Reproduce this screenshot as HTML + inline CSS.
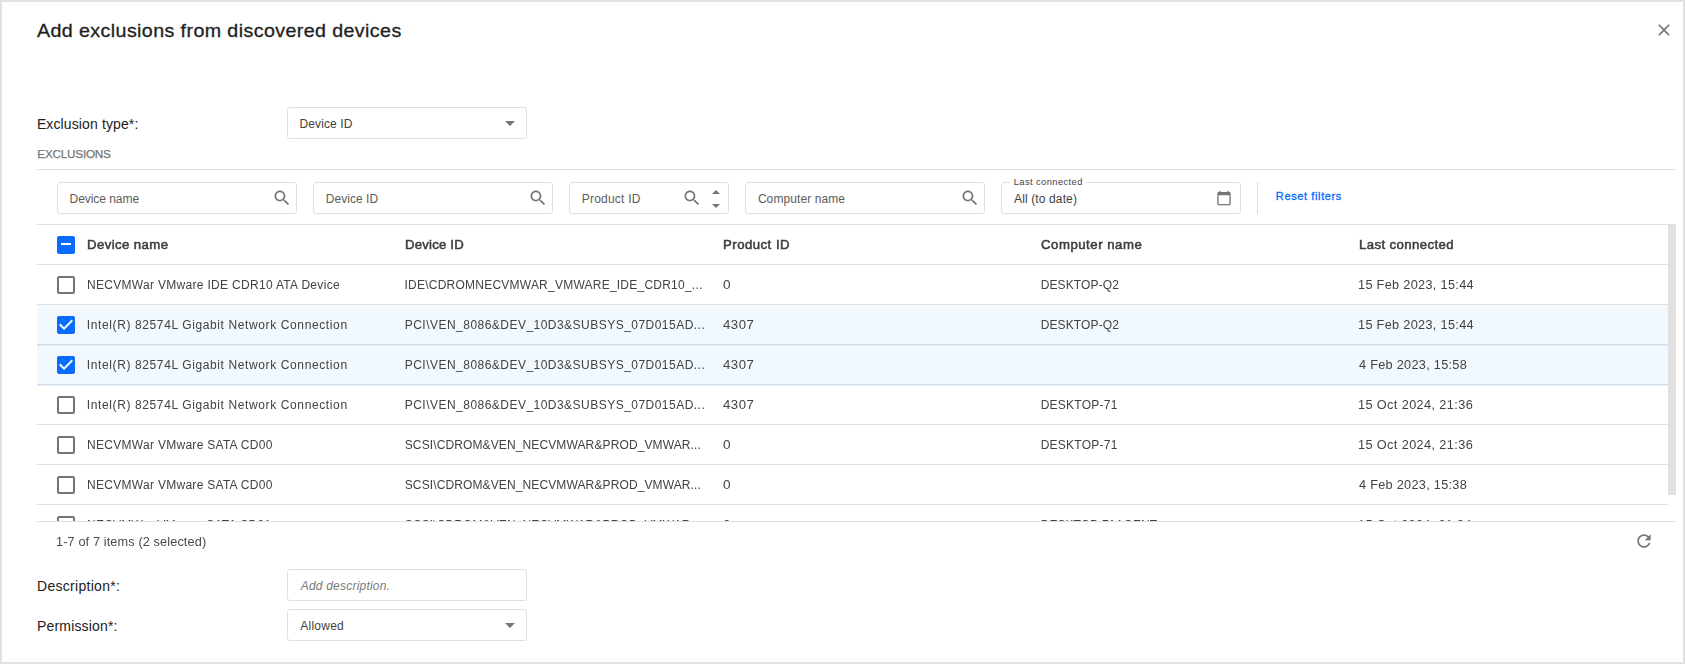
<!DOCTYPE html>
<html lang="en">
<head>
<meta charset="utf-8">
<title>Add exclusions from discovered devices</title>
<style>
*{box-sizing:border-box;margin:0;padding:0}
html,body{width:1685px;height:664px;overflow:hidden;background:#e1e1e1}
body{font-family:"Liberation Sans",sans-serif;color:#424242;font-size:12px;position:relative}
.dlg{position:absolute;left:2px;top:2px;width:1681px;height:660px;background:#fff}
.t{position:absolute;white-space:nowrap;line-height:16px;height:16px}
.box{position:absolute;border:1px solid #e0e0e0;border-radius:3px;background:#fff;height:32px}
.hline{position:absolute;height:1px;background:#e0e0e0}
.caret{position:absolute;width:0;height:0;border-left:5px solid transparent;border-right:5px solid transparent;border-top:5px solid #757575}
.tri{position:absolute;width:0;height:0;border-left:4px solid transparent;border-right:4px solid transparent}
svg{position:absolute;display:block}
.clip{position:absolute;left:0;top:0;width:1685px;height:521px;overflow:hidden;will-change:transform}
.rowbg{position:absolute;left:37px;width:1631px;height:39px;background:#f1f8fe}
</style>
</head>
<body>
<div class="dlg"></div>

<div class="t" style="left:37.29px;top:23.20px;font-size:18.2px;letter-spacing:0.372px;color:#1f1f1f;-webkit-text-stroke:0.3px #1f1f1f;transform:scaleX(1.08);transform-origin:0 50%">Add exclusions from discovered devices</div>
<svg style="left:1654px;top:20px" width="20" height="20" viewBox="0 0 24 24"><path d="M19 6.41L17.59 5 12 10.59 6.41 5 5 6.41 10.59 12 5 17.59 6.41 19 12 13.41 17.59 19 19 17.59 13.41 12z" fill="#757575"/></svg>
<div class="t" style="left:36.92px;top:116.40px;font-size:14px;letter-spacing:0.120px;color:#212121">Exclusion type*:</div>
<div class="box" style="left:287px;top:107px;width:240px"></div><div class="caret" style="left:505px;top:121px"></div>
<div class="t" style="left:299.54px;top:116.00px;font-size:12px;letter-spacing:0.102px;color:#424242">Device ID</div>
<div class="t" style="left:37.30px;top:145.70px;font-size:11.7px;letter-spacing:-0.198px;color:#757575;-webkit-text-stroke:0.25px #757575">EXCLUSIONS</div>
<div class="hline" style="left:37px;top:169px;width:1639px"></div>
<div class="box" style="left:57px;top:182px;width:240px"></div>
<div class="box" style="left:313px;top:182px;width:240px"></div>
<div class="box" style="left:569px;top:182px;width:160px"></div>
<div class="box" style="left:745px;top:182px;width:240px"></div>
<div class="box" style="left:1001px;top:182px;width:240px"></div>
<svg style="left:272px;top:188px" width="20" height="20" viewBox="0 0 24 24"><path d="M15.5 14h-.79l-.28-.27C15.41 12.59 16 11.11 16 9.5 16 5.91 13.09 3 9.5 3S3 5.91 3 9.5 5.91 16 9.5 16c1.61 0 3.09-.59 4.23-1.57l.27.28v.79l5 4.99L20.49 19l-4.99-5zm-6 0C7.01 14 5 11.99 5 9.5S7.01 5 9.5 5 14 7.01 14 9.5 11.99 14 9.5 14z" fill="#757575"/></svg>
<svg style="left:528px;top:188px" width="20" height="20" viewBox="0 0 24 24"><path d="M15.5 14h-.79l-.28-.27C15.41 12.59 16 11.11 16 9.5 16 5.91 13.09 3 9.5 3S3 5.91 3 9.5 5.91 16 9.5 16c1.61 0 3.09-.59 4.23-1.57l.27.28v.79l5 4.99L20.49 19l-4.99-5zm-6 0C7.01 14 5 11.99 5 9.5S7.01 5 9.5 5 14 7.01 14 9.5 11.99 14 9.5 14z" fill="#757575"/></svg>
<svg style="left:682px;top:188px" width="20" height="20" viewBox="0 0 24 24"><path d="M15.5 14h-.79l-.28-.27C15.41 12.59 16 11.11 16 9.5 16 5.91 13.09 3 9.5 3S3 5.91 3 9.5 5.91 16 9.5 16c1.61 0 3.09-.59 4.23-1.57l.27.28v.79l5 4.99L20.49 19l-4.99-5zm-6 0C7.01 14 5 11.99 5 9.5S7.01 5 9.5 5 14 7.01 14 9.5 11.99 14 9.5 14z" fill="#757575"/></svg>
<svg style="left:960px;top:188px" width="20" height="20" viewBox="0 0 24 24"><path d="M15.5 14h-.79l-.28-.27C15.41 12.59 16 11.11 16 9.5 16 5.91 13.09 3 9.5 3S3 5.91 3 9.5 5.91 16 9.5 16c1.61 0 3.09-.59 4.23-1.57l.27.28v.79l5 4.99L20.49 19l-4.99-5zm-6 0C7.01 14 5 11.99 5 9.5S7.01 5 9.5 5 14 7.01 14 9.5 11.99 14 9.5 14z" fill="#757575"/></svg>
<div class="tri" style="left:712px;top:190px;border-bottom:4px solid #757575"></div><div class="tri" style="left:712px;top:204px;border-top:4px solid #757575"></div>
<div style="position:absolute;left:1010px;top:178px;width:76px;height:10px;background:#fff"></div>
<svg style="left:1216px;top:190px" width="16" height="16" viewBox="0 0 24 24"><path d="M20 3h-1V1h-2v2H7V1H5v2H4c-1.1 0-2 .9-2 2v16c0 1.1.9 2 2 2h16c1.1 0 2-.9 2-2V5c0-1.1-.9-2-2-2zm0 18H4V8h16v13z" fill="#757575"/></svg>
<div style="position:absolute;left:1257px;top:182px;width:1px;height:32px;background:#dcdcdc"></div>
<div class="t" style="left:69.50px;top:191.00px;font-size:12px;letter-spacing:-0.040px;color:#5c5c5c">Device name</div>
<div class="t" style="left:325.73px;top:191.00px;font-size:12px;letter-spacing:0.045px;color:#5c5c5c">Device ID</div>
<div class="t" style="left:581.71px;top:191.00px;font-size:12px;letter-spacing:0.220px;color:#5c5c5c">Product ID</div>
<div class="t" style="left:757.89px;top:191.00px;font-size:12px;letter-spacing:0.081px;color:#5c5c5c">Computer name</div>
<div class="t" style="left:1013.77px;top:174.00px;font-size:9.3px;letter-spacing:0.423px;color:#424242">Last connected</div>
<div class="t" style="left:1014.06px;top:191.00px;font-size:12px;letter-spacing:0.125px;color:#424242">All (to date)</div>
<div class="t" style="left:1275.84px;top:188.00px;font-size:11px;letter-spacing:0.622px;color:#0568ff;-webkit-text-stroke:0.3px #0568ff">Reset filters</div>
<div class="hline" style="left:37px;top:224px;width:1639px"></div>
<div style="position:absolute;left:1668px;top:224px;width:8px;height:271px;background:#e0e0e0"></div>
<div class="clip">
<div class="rowbg" style="top:305px"></div><div class="rowbg" style="top:345px"></div>
<div class="hline" style="left:37px;top:264px;width:1631px;background:#e0e0e0"></div>
<div class="hline" style="left:37px;top:304px;width:1631px;background:#e0e0e0"></div>
<div class="hline" style="left:37px;top:344px;width:1631px;background:#d4dbe3"></div>
<div class="hline" style="left:37px;top:384px;width:1631px;background:#d4dbe3"></div>
<div class="hline" style="left:37px;top:424px;width:1631px;background:#e0e0e0"></div>
<div class="hline" style="left:37px;top:464px;width:1631px;background:#e0e0e0"></div>
<div class="hline" style="left:37px;top:504px;width:1631px;background:#e0e0e0"></div>
<div class="hline" style="left:37px;top:345px;width:1631px;background:#dceafc"></div><div class="hline" style="left:37px;top:385px;width:1631px;background:#e8f2fe"></div>
<svg style="left:57px;top:236px" width="18" height="18" viewBox="3 3 18 18"><path d="M19 3H5c-1.1 0-2 .9-2 2v14c0 1.1.9 2 2 2h14c1.1 0 2-.9 2-2V5c0-1.1-.9-2-2-2zm-2 9H7v-2h10v2z" fill="#0a6cff"/></svg>
<svg style="left:57px;top:276px" width="18" height="18" viewBox="3 3 18 18"><path d="M19 5v14H5V5h14m0-2H5c-1.1 0-2 .9-2 2v14c0 1.1.9 2 2 2h14c1.1 0 2-.9 2-2V5c0-1.1-.9-2-2-2z" fill="#757575"/></svg>
<svg style="left:57px;top:316px" width="18" height="18" viewBox="3 3 18 18"><path d="M19 3H5c-1.11 0-2 .9-2 2v14c0 1.1.89 2 2 2h14c1.11 0 2-.9 2-2V5c0-1.1-.89-2-2-2zm-9 14l-5-5 1.41-1.41L10 14.17l7.59-7.59L19 8l-9 9z" fill="#0a6cff"/></svg>
<svg style="left:57px;top:356px" width="18" height="18" viewBox="3 3 18 18"><path d="M19 3H5c-1.11 0-2 .9-2 2v14c0 1.1.89 2 2 2h14c1.11 0 2-.9 2-2V5c0-1.1-.89-2-2-2zm-9 14l-5-5 1.41-1.41L10 14.17l7.59-7.59L19 8l-9 9z" fill="#0a6cff"/></svg>
<svg style="left:57px;top:396px" width="18" height="18" viewBox="3 3 18 18"><path d="M19 5v14H5V5h14m0-2H5c-1.1 0-2 .9-2 2v14c0 1.1.9 2 2 2h14c1.1 0 2-.9 2-2V5c0-1.1-.9-2-2-2z" fill="#757575"/></svg>
<svg style="left:57px;top:436px" width="18" height="18" viewBox="3 3 18 18"><path d="M19 5v14H5V5h14m0-2H5c-1.1 0-2 .9-2 2v14c0 1.1.9 2 2 2h14c1.1 0 2-.9 2-2V5c0-1.1-.9-2-2-2z" fill="#757575"/></svg>
<svg style="left:57px;top:476px" width="18" height="18" viewBox="3 3 18 18"><path d="M19 5v14H5V5h14m0-2H5c-1.1 0-2 .9-2 2v14c0 1.1.9 2 2 2h14c1.1 0 2-.9 2-2V5c0-1.1-.9-2-2-2z" fill="#757575"/></svg>
<svg style="left:57px;top:516px" width="18" height="18" viewBox="3 3 18 18"><path d="M19 5v14H5V5h14m0-2H5c-1.1 0-2 .9-2 2v14c0 1.1.9 2 2 2h14c1.1 0 2-.9 2-2V5c0-1.1-.9-2-2-2z" fill="#757575"/></svg>
<div class="t" style="left:87.31px;top:237.10px;font-size:12.3px;letter-spacing:0.399px;color:#3c3c3c;-webkit-text-stroke:0.5px #3c3c3c;transform:scaleX(1.07);transform-origin:0 50%">Device name</div>
<div class="t" style="left:405.31px;top:237.10px;font-size:12.3px;letter-spacing:0.190px;color:#3c3c3c;-webkit-text-stroke:0.5px #3c3c3c;transform:scaleX(1.07);transform-origin:0 50%">Device ID</div>
<div class="t" style="left:722.50px;top:237.10px;font-size:12.3px;letter-spacing:0.456px;color:#3c3c3c;-webkit-text-stroke:0.5px #3c3c3c;transform:scaleX(1.07);transform-origin:0 50%">Product ID</div>
<div class="t" style="left:1041.03px;top:237.10px;font-size:12.3px;letter-spacing:0.502px;color:#3c3c3c;-webkit-text-stroke:0.5px #3c3c3c;transform:scaleX(1.07);transform-origin:0 50%">Computer name</div>
<div class="t" style="left:1359.12px;top:237.10px;font-size:12.3px;letter-spacing:0.388px;color:#3c3c3c;-webkit-text-stroke:0.5px #3c3c3c;transform:scaleX(1.07);transform-origin:0 50%">Last connected</div>
<div class="t" style="left:86.91px;top:277.00px;font-size:12px;letter-spacing:0.311px;color:#424242">NECVMWar VMware IDE CDR10 ATA Device</div>
<div class="t" style="left:404.49px;top:277.00px;font-size:12px;letter-spacing:0.234px;color:#424242">IDE\CDROMNECVMWAR_VMWARE_IDE_CDR10_...</div>
<div class="t" style="left:723.30px;top:277.00px;font-size:12px;letter-spacing:0.000px;color:#424242;transform:scaleX(1.13);transform-origin:0.5px 50%">0</div>
<div class="t" style="left:1040.64px;top:277.00px;font-size:12px;letter-spacing:0.135px;color:#424242">DESKTOP-Q2</div>
<div class="t" style="left:1357.94px;top:277.00px;font-size:12px;letter-spacing:0.292px;color:#424242;transform:scaleX(1.06);transform-origin:0 50%">15 Feb 2023, 15:44</div>
<div class="t" style="left:86.75px;top:317.00px;font-size:12px;letter-spacing:0.617px;color:#424242">Intel(R) 82574L Gigabit Network Connection</div>
<div class="t" style="left:404.75px;top:317.00px;font-size:12px;letter-spacing:0.474px;color:#424242">PCI\VEN_8086&amp;DEV_10D3&amp;SUBSYS_07D015AD...</div>
<div class="t" style="left:723.36px;top:317.00px;font-size:12px;letter-spacing:0.464px;color:#424242;transform:scaleX(1.1);transform-origin:0 50%">4307</div>
<div class="t" style="left:1040.64px;top:317.00px;font-size:12px;letter-spacing:0.134px;color:#424242">DESKTOP-Q2</div>
<div class="t" style="left:1357.94px;top:317.00px;font-size:12px;letter-spacing:0.292px;color:#424242;transform:scaleX(1.06);transform-origin:0 50%">15 Feb 2023, 15:44</div>
<div class="t" style="left:86.75px;top:357.00px;font-size:12px;letter-spacing:0.617px;color:#424242">Intel(R) 82574L Gigabit Network Connection</div>
<div class="t" style="left:404.75px;top:357.00px;font-size:12px;letter-spacing:0.474px;color:#424242">PCI\VEN_8086&amp;DEV_10D3&amp;SUBSYS_07D015AD...</div>
<div class="t" style="left:723.36px;top:357.00px;font-size:12px;letter-spacing:0.464px;color:#424242;transform:scaleX(1.1);transform-origin:0 50%">4307</div>
<div class="t" style="left:1359.16px;top:357.00px;font-size:12px;letter-spacing:0.264px;color:#424242;transform:scaleX(1.06);transform-origin:0 50%">4 Feb 2023, 15:58</div>
<div class="t" style="left:86.75px;top:397.00px;font-size:12px;letter-spacing:0.617px;color:#424242">Intel(R) 82574L Gigabit Network Connection</div>
<div class="t" style="left:404.75px;top:397.00px;font-size:12px;letter-spacing:0.474px;color:#424242">PCI\VEN_8086&amp;DEV_10D3&amp;SUBSYS_07D015AD...</div>
<div class="t" style="left:723.36px;top:397.00px;font-size:12px;letter-spacing:0.463px;color:#424242;transform:scaleX(1.1);transform-origin:0 50%">4307</div>
<div class="t" style="left:1040.71px;top:397.00px;font-size:12px;letter-spacing:0.244px;color:#424242">DESKTOP-71</div>
<div class="t" style="left:1357.94px;top:397.00px;font-size:12px;letter-spacing:0.363px;color:#424242;transform:scaleX(1.06);transform-origin:0 50%">15 Oct 2024, 21:36</div>
<div class="t" style="left:87.11px;top:437.00px;font-size:12px;letter-spacing:0.283px;color:#424242">NECVMWar VMware SATA CD00</div>
<div class="t" style="left:404.76px;top:437.00px;font-size:12px;letter-spacing:0.119px;color:#424242">SCSI\CDROM&amp;VEN_NECVMWAR&amp;PROD_VMWAR...</div>
<div class="t" style="left:723.30px;top:437.00px;font-size:12px;letter-spacing:0.000px;color:#424242;transform:scaleX(1.13);transform-origin:0.5px 50%">0</div>
<div class="t" style="left:1040.71px;top:437.00px;font-size:12px;letter-spacing:0.244px;color:#424242">DESKTOP-71</div>
<div class="t" style="left:1357.94px;top:437.00px;font-size:12px;letter-spacing:0.363px;color:#424242;transform:scaleX(1.06);transform-origin:0 50%">15 Oct 2024, 21:36</div>
<div class="t" style="left:87.11px;top:477.00px;font-size:12px;letter-spacing:0.283px;color:#424242">NECVMWar VMware SATA CD00</div>
<div class="t" style="left:404.76px;top:477.00px;font-size:12px;letter-spacing:0.119px;color:#424242">SCSI\CDROM&amp;VEN_NECVMWAR&amp;PROD_VMWAR...</div>
<div class="t" style="left:723.30px;top:477.00px;font-size:12px;letter-spacing:0.000px;color:#424242;transform:scaleX(1.13);transform-origin:0.5px 50%">0</div>
<div class="t" style="left:1359.16px;top:477.00px;font-size:12px;letter-spacing:0.264px;color:#424242;transform:scaleX(1.06);transform-origin:0 50%">4 Feb 2023, 15:38</div>
<div class="t" style="left:87.11px;top:517.00px;font-size:12px;letter-spacing:0.225px;color:#424242">NECVMWar VMware SATA CD01</div>
<div class="t" style="left:404.76px;top:517.00px;font-size:12px;letter-spacing:0.119px;color:#424242">SCSI\CDROM&amp;VEN_NECVMWAR&amp;PROD_VMWAR...</div>
<div class="t" style="left:723.30px;top:517.00px;font-size:12px;letter-spacing:0.000px;color:#424242;transform:scaleX(1.13);transform-origin:0.5px 50%">0</div>
<div class="t" style="left:1040.71px;top:517.00px;font-size:12px;letter-spacing:0.036px;color:#424242">DESKTOP-71AGENT</div>
<div class="t" style="left:1357.94px;top:517.00px;font-size:12px;letter-spacing:0.292px;color:#424242;transform:scaleX(1.06);transform-origin:0 50%">15 Oct 2024, 21:34</div>
</div>
<div class="hline" style="left:37px;top:521px;width:1639px"></div>
<div class="t" style="left:56.28px;top:534.20px;font-size:12.7px;letter-spacing:0.133px;color:#4a4a4a;will-change:transform">1-7 of 7 items (2 selected)</div>
<svg style="left:1634px;top:531px" width="20" height="20" viewBox="0 0 24 24"><path d="M17.65 6.35C16.2 4.9 14.21 4 12 4c-4.42 0-7.99 3.58-7.99 8s3.57 8 7.99 8c3.73 0 6.84-2.55 7.73-6h-2.08c-.82 2.33-3.04 4-5.65 4-3.31 0-6-2.69-6-6s2.69-6 6-6c1.66 0 3.14.69 4.22 1.78L13 11h7V4l-2.35 2.35z" fill="#757575"/></svg>
<div class="t" style="left:37.00px;top:578.10px;font-size:14px;letter-spacing:0.295px;color:#212121">Description*:</div>
<div class="box" style="left:287px;top:569px;width:240px"></div>
<div class="t" style="left:300.69px;top:578.20px;font-size:12px;letter-spacing:0.214px;color:#7a7a7a;font-style:italic">Add description.</div>
<div class="t" style="left:37.05px;top:617.90px;font-size:14px;letter-spacing:0.163px;color:#212121">Permission*:</div>
<div class="box" style="left:287px;top:609px;width:240px"></div><div class="caret" style="left:505px;top:623px"></div>
<div class="t" style="left:300.30px;top:617.90px;font-size:12px;letter-spacing:0.242px;color:#424242">Allowed</div>

</body>
</html>
